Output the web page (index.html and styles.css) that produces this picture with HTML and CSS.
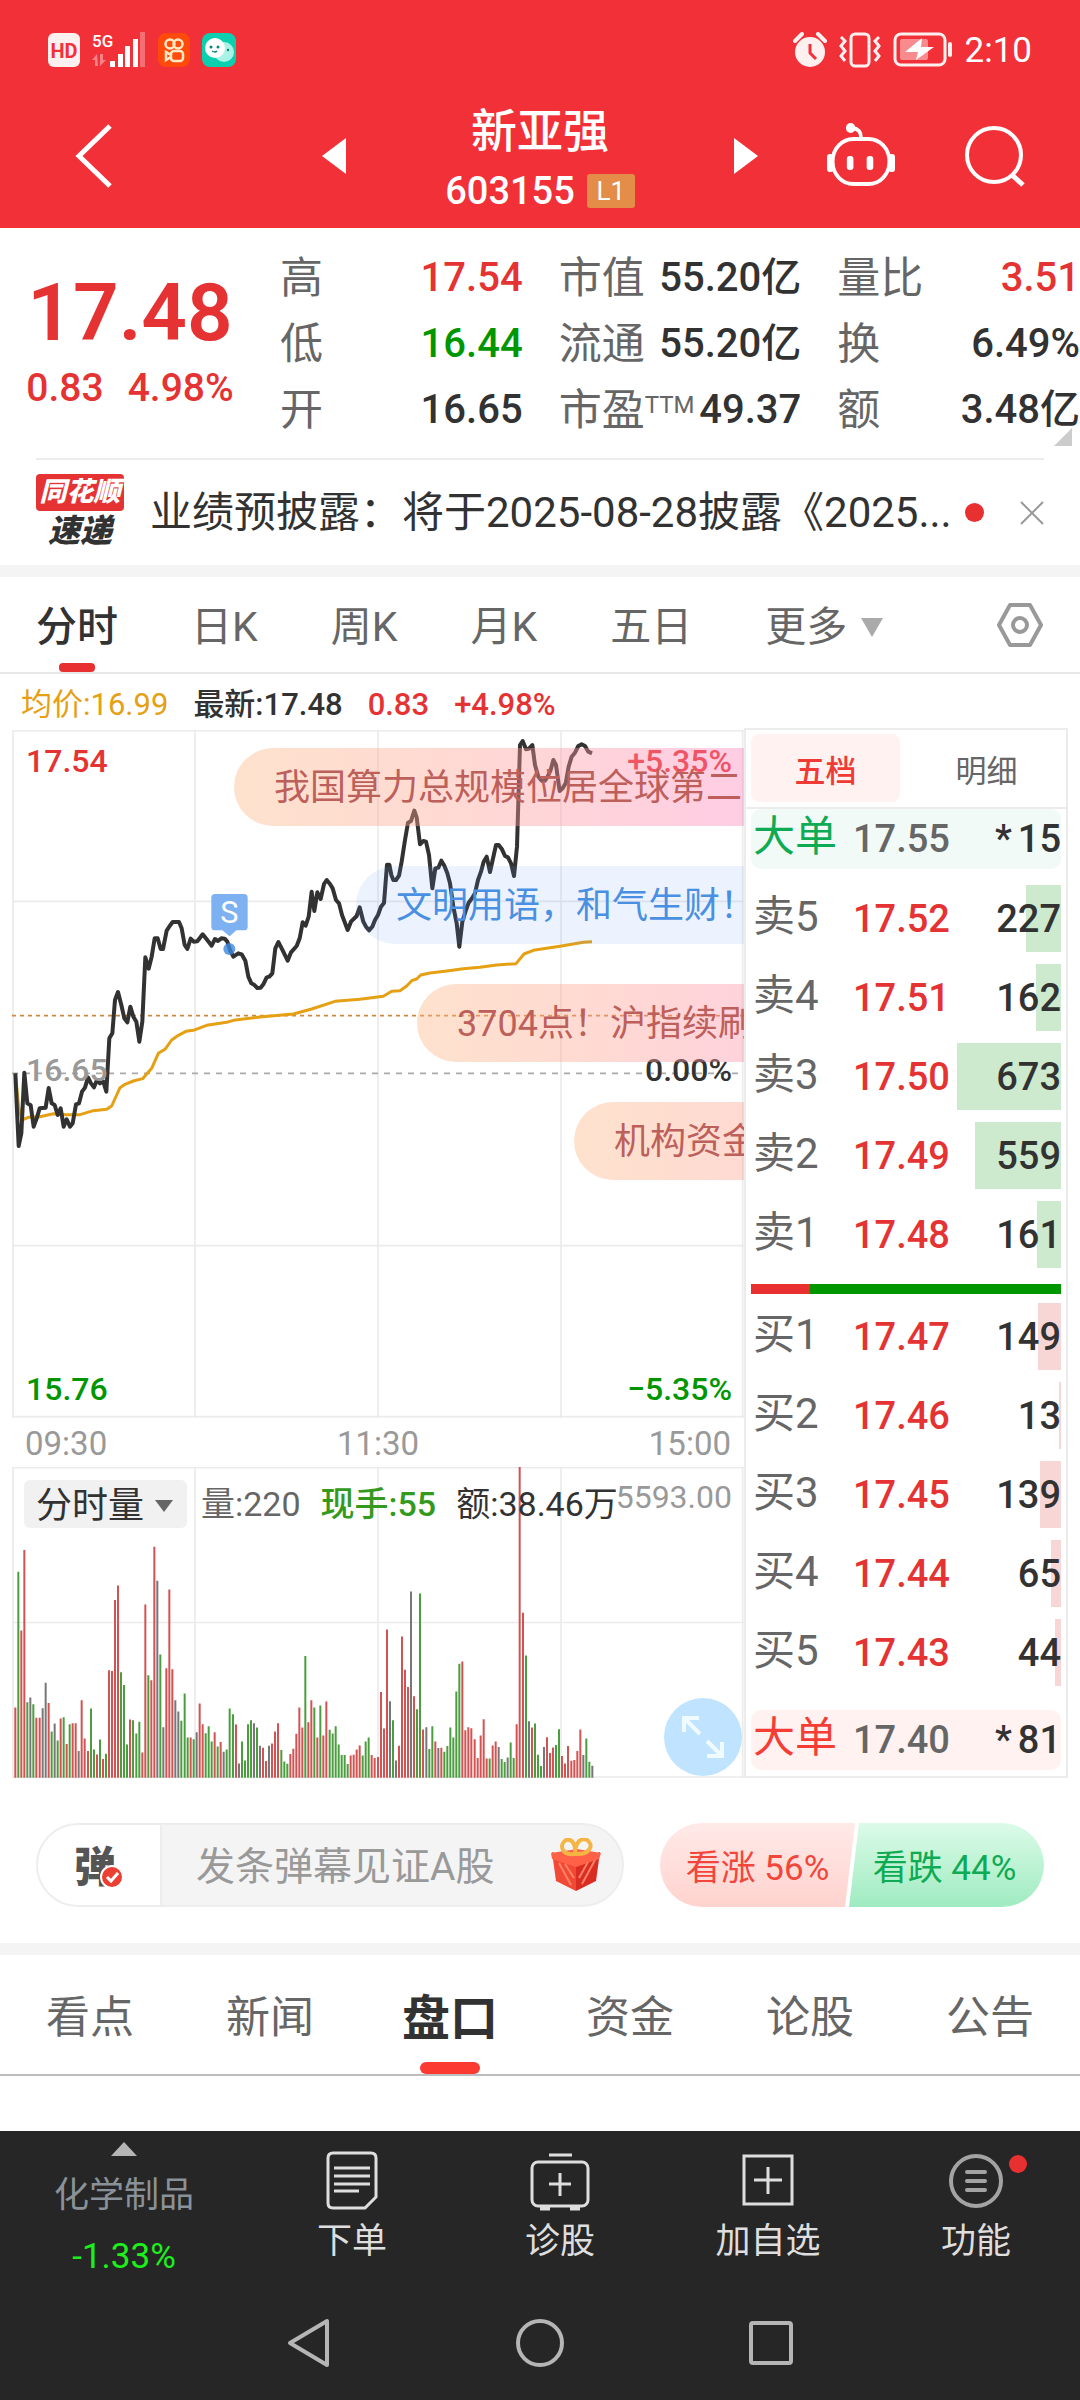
FILE: index.html
```html
<!DOCTYPE html>
<html lang="zh-CN">
<head>
<meta charset="utf-8">
<meta name="viewport" content="width=device-width, initial-scale=1">
<title>新亚强 603155</title>
<link rel="stylesheet" href="styles.css">
</head>
<body>
<header class="top">
  <div class="status">
    <div class="status-side">
      <svg width="32" height="34" viewBox="0 0 32 34"><rect width="32" height="34" rx="6" fill="#fff0f0"/><text x="16" y="25" class="hd">HD</text></svg>
      <svg width="54" height="36" viewBox="0 0 54 36"><text x="0" y="15" class="net">5G</text><g fill="#fff"><path d="M5 22l-5 6h3v6h3zM8 22v12l6-6h-3v-6z" opacity=".4"/><rect x="18" y="29" width="5" height="6"/><rect x="26" y="22" width="5" height="13"/><rect x="33" y="14" width="5" height="21"/><rect x="41" y="7" width="5" height="28"/><rect x="48" y="0" width="5" height="35" opacity=".3"/></g></svg>
      <svg width="32" height="34" viewBox="0 0 32 34"><rect width="32" height="34" rx="8" fill="#ff4a0c"/><g fill="none" stroke="#ffe9c4" stroke-width="2.5"><circle cx="12" cy="11" r="4.500"/><circle cx="20" cy="11" r="4.500"/><rect x="13" y="18" width="12" height="10" rx="3"/><path d="M13 22l-5-3v8l5-3"/></g></svg>
      <svg width="34" height="34" viewBox="0 0 34 34"><rect width="34" height="34" rx="8" fill="#0ccfb0"/><circle cx="22" cy="19" r="10" fill="#a9f2e6"/><circle cx="13" cy="15" r="10" fill="#fff"/><g fill="#087"><circle cx="9" cy="14" r="1.500"/><circle cx="16" cy="14" r="1.500"/><circle cx="26" cy="17" r="1.200"/></g><path d="M10 18q3 2 5 0" stroke="#087" fill="none" stroke-width="1.500"/></svg>
    </div>
    <div class="status-side status-right">
      <svg width="34" height="36" viewBox="0 0 34 36"><circle cx="17" cy="20" r="15" fill="#fff0f0"/><path d="M2 9l7-7M32 9l-7-7" stroke="#fff0f0" stroke-width="4" stroke-linecap="round"/><path d="M17 12v9l6 6" fill="none" stroke="#f13038" stroke-width="3"/></svg>
      <svg width="42" height="36" viewBox="0 0 42 36"><g fill="none" stroke="#fff0f0" stroke-width="3"><rect x="12" y="2" width="18" height="32" rx="4"/><path d="M2 5l4 4-4 5 4 5-4 5 4 5M40 5l-4 4 4 5-4 5 4 5-4 5"/></g></svg>
      <svg width="60" height="36" viewBox="0 0 60 36"><rect x="2" y="2" width="50" height="31" rx="6" fill="none" stroke="#fff0f0" stroke-width="3"/><rect x="7" y="7" width="28" height="21" rx="2" fill="#f98a8e"/><path d="M29 6L12 20h13l-2 8 18-13H28z" fill="#fff"/><rect x="55" y="10" width="4" height="15" rx="2" fill="#fff0f0"/></svg>
      <span class="clock">2:10</span>
    </div>
  </div>
  <div class="titlebar">
    <button class="icon-btn back" aria-label="返回"><svg width="40" height="66" viewBox="0 0 40 66"><path d="M36 3L5 33l31 30" fill="none" stroke="#fff" stroke-width="5"/></svg></button>
    <button class="icon-btn" aria-label="上一只"><svg width="24" height="36" viewBox="0 0 24 36"><path d="M24 0v36L0 18z" fill="#fff"/></svg></button>
    <div class="stock">
      <h1>新亚强</h1>
      <div class="code">603155<span class="level">L1</span></div>
    </div>
    <button class="icon-btn" aria-label="下一只"><svg width="24" height="36" viewBox="0 0 24 36"><path d="M0 0v36l24-18z" fill="#fff"/></svg></button>
    <button class="icon-btn robot" aria-label="智能助手"><svg width="68" height="64" viewBox="0 0 72 64" preserveAspectRatio="none"><g fill="none" stroke="#fff" stroke-width="4"><rect x="6" y="16" width="60" height="45" rx="22"/><path d="M36 15c0-6-2-9-9-10" stroke-width="4"/></g><g fill="#fff"><circle cx="25" cy="5" r="5"/><rect x="21" y="33" width="7" height="14" rx="3"/><rect x="42" y="33" width="7" height="14" rx="3"/><rect x="0" y="31" width="7" height="18" rx="3"/><rect x="65" y="31" width="7" height="18" rx="3"/></g></svg></button>
    <button class="icon-btn" aria-label="搜索"><svg width="62" height="62" viewBox="0 0 62 62"><circle cx="30" cy="30" r="27" fill="none" stroke="#fff" stroke-width="4"/><path d="M48 50l11 10" stroke="#fff" stroke-width="5"/></svg></button>
  </div>
</header>

<section class="quote">
  <div class="price-block">
    <strong class="price">17.48</strong>
    <div class="change"><span>0.83</span><span>4.98%</span></div>
  </div>
  <dl class="stats">
    <div><dt>高</dt><dd class="up">17.54</dd></div>
    <div><dt>低</dt><dd class="down">16.44</dd></div>
    <div><dt>开</dt><dd>16.65</dd></div>
  </dl>
  <dl class="stats">
    <div><dt>市值</dt><dd>55.20亿</dd></div>
    <div><dt>流通</dt><dd>55.20亿</dd></div>
    <div><dt>市盈<sup>TTM</sup></dt><dd>49.37</dd></div>
  </dl>
  <dl class="stats">
    <div><dt>量比</dt><dd class="up">3.51</dd></div>
    <div><dt>换</dt><dd>6.49%</dd></div>
    <div><dt>额</dt><dd>3.48亿</dd></div>
  </dl>
  <span class="corner"></span>
</section>

<section class="notice">
  <div class="brand"><span class="brand-top">同花顺</span><span class="brand-bottom">速递</span></div>
  <a class="notice-text" href="#">业绩预披露：将于2025-08-28披露《2025...</a>
  <span class="dot"></span>
  <button class="icon-btn" aria-label="关闭"><svg width="24" height="24" viewBox="0 0 24 24"><path d="M1 1l22 22M23 1L1 23" stroke="#999" stroke-width="2"/></svg></button>
</section>

<nav class="periods">
  <a class="period active" href="#">分时</a>
  <a class="period" href="#">日K</a>
  <a class="period" href="#">周K</a>
  <a class="period" href="#">月K</a>
  <a class="period" href="#">五日</a>
  <a class="period more" href="#">更多<svg width="22" height="19" viewBox="0 0 22 19"><path d="M0 0h22L11 19z" fill="#aaa"/></svg></a>
  <button class="icon-btn settings" aria-label="设置"><svg width="48" height="46" viewBox="0 0 48 46"><path d="M14 3h20l11 20-11 20H14L3 23z" fill="none" stroke="#999" stroke-width="4" stroke-linejoin="round"/><circle cx="24" cy="23" r="7" fill="none" stroke="#999" stroke-width="4"/></svg></button>
</nav>

<p class="summary"><span class="avg">均价:16.99</span><span>最新:17.48</span><span class="up">0.83</span><span class="up">+4.98%</span></p>

<main class="board">
  <div class="charts">
    <div class="chart">
      <svg class="plot" viewBox="36 30 2196 2064" preserveAspectRatio="none">
        <path class="grid" d="M39 30V2094M585 30V2094M1134 30V2094M1683 30V2094M2228 30V2094M36 32H2232M36 544H2232M36 1577H2232M36 2090H2232"/>
        <path d="M36 887H2232" class="dash-orange"/>
        <path d="M36 1060H2232" class="dash-grey"/>
        <polyline class="line-avg" points="46,1060 56,1160 66,1200 85,1192 120,1190 160,1181 200,1184 240,1184 280,1172 320,1168 335,1158 350,1125 360,1103 375,1093 400,1083 428,1076 440,1062 455,1045 475,1000 495,988 515,960 535,946 558,934 580,931 620,916 680,907 700,901 780,891 880,882 935,867 1005,844 1080,838 1150,829 1175,814 1200,812 1220,798 1235,782 1250,777 1262,765 1290,759 1340,753 1390,746 1440,742 1490,735 1548,731 1572,702 1600,691 1680,679 1750,667 1776,665"/>
        <polyline class="line-price" points="46,1060 50,1150 56,1278 64,1240 73,1058 82,1150 92,1156 101,1220 110,1195 119,1165 137,1163 146,1104 155,1150 164,1155 173,1185 182,1165 191,1220 200,1198 210,1220 218,1210 228,1153 237,1150 246,1115 255,1103 264,1072 273,1090 282,1102 291,1080 300,1090 310,1085 319,1115 328,955 337,940 345,840 354,816 364,855 373,895 382,907 391,860 400,890 409,905 418,965 427,905 436,712 446,746 455,710 464,655 473,655 482,687 489,687 500,632 509,618 518,606 537,606 545,625 554,675 562,687 572,656 581,665 592,664 608,643 620,658 635,677 645,657 654,663 664,655 674,656 682,665 690,690 700,710 715,700 725,703 736,722 745,770 754,790 762,794 772,804 782,803 790,793 800,772 808,770 817,760 826,685 835,666 845,685 863,722 873,697 890,678 899,655 908,607 917,617 926,590 935,515 943,573 952,517 962,537 972,492 980,480 990,492 998,505 1008,540 1017,550 1026,585 1043,630 1053,605 1070,588 1079,562 1090,605 1098,620 1107,631 1117,620 1125,600 1134,585 1143,560 1152,549 1161,434 1168,434 1174,465 1180,480 1188,480 1197,467 1205,425 1215,360 1224,308 1233,303 1243,272 1250,292 1260,373 1270,363 1278,365 1287,405 1297,505 1306,445 1315,443 1324,422 1333,437 1342,460 1350,490 1360,560 1370,610 1378,680 1387,605 1398,570 1406,548 1416,535 1425,520 1434,480 1443,455 1451,425 1460,410 1470,456 1478,420 1488,375 1496,375 1506,388 1515,408 1524,412 1533,430 1542,468 1551,380 1560,75 1568,63 1578,88 1587,86 1597,75 1605,135 1615,170 1625,182 1635,182 1643,170 1652,150 1660,120 1668,135 1679,213 1688,205 1697,190 1706,140 1715,110 1725,98 1735,78 1745,73 1755,78 1765,95 1776,100"/>
        <path class="flag" d="M645 522h87q11 0 11 11v87q0 11-11 11h-23l-20 18-22-18h-22q-11 0-11-11v-87q0-11 11-11z"/>
        <text class="flag-text" x="688" y="608">S</text>
        <circle class="flag-dot" cx="688" cy="687" r="18"/>
      </svg>
      <span class="axis top-left up">17.54</span>
      <span class="axis top-right up">+5.35%</span>
      <span class="axis mid-left">16.65</span>
      <span class="axis mid-right">0.00%</span>
      <span class="axis bottom-left down">15.76</span>
      <span class="axis bottom-right down">−5.35%</span>
      <div class="danmaku">
        <span class="bullet warm b1">我国算力总规模位居全球第二</span>
        <span class="bullet cool b2">文明用语，和气生财！</span>
        <span class="bullet warm b3">3704点！沪指续刷</span>
        <span class="bullet warm b4">机构资金</span>
      </div>
    </div>
    <div class="times"><span>09:30</span><span>11:30</span><span>15:00</span></div>
    <div class="volume">
      <svg class="plot" viewBox="36 378 2196 936" preserveAspectRatio="none">
        <path class="grid" d="M39 378V1314M585 378V1314M1134 378V1314M1683 378V1314M2228 378V1314M36 380H2232M36 846H2232M36 1311H2232"/>
        <path class="vol vol-up" id="vol-r"/>
        <path class="vol vol-down" id="vol-g"/>
        <path class="vol vol-flat" id="vol-k"/>
      </svg>
      <div class="vol-head">
        <button class="vol-pick">分时量<svg width="18" height="12" viewBox="0 0 18 12"><path d="M0 0h18L9 12z" fill="#666"/></svg></button>
        <span class="muted">量:220</span><span class="vol-now">现手:55</span><span>额:38.46万</span>
      </div>
      <span class="vol-max">5593.00</span>
      <button class="expand" aria-label="全屏"><svg width="44" height="44" viewBox="0 0 44 44"><path d="M19 19L4 4M3 17V3h15M26 26l14 14M41 27v14H26" fill="none" stroke="#f0fbff" stroke-width="4"/></svg></button>
    </div>
  </div>

  <aside class="book">
    <div class="book-tabs"><button class="book-tab active">五档</button><button class="book-tab">明细</button></div>
    <table class="levels">
      <tr class="big sell"><th>大单</th><td>17.55</td><td><i>*</i>15</td></tr>
    </table>
    <table class="levels asks">
      <tr><th>卖5</th><td class="up">17.52</td><td><b class="depth" style="width:35px"></b><span>227</span></td></tr>
      <tr><th>卖4</th><td class="up">17.51</td><td><b class="depth" style="width:25px"></b><span>162</span></td></tr>
      <tr><th>卖3</th><td class="up">17.50</td><td><b class="depth" style="width:104px"></b><span>673</span></td></tr>
      <tr><th>卖2</th><td class="up">17.49</td><td><b class="depth" style="width:86px"></b><span>559</span></td></tr>
      <tr><th>卖1</th><td class="up">17.48</td><td><b class="depth" style="width:24px"></b><span>161</span></td></tr>
    </table>
    <div class="ratio"><span style="width:19%"></span></div>
    <table class="levels bids">
      <tr><th>买1</th><td class="up">17.47</td><td><b class="depth" style="width:23px"></b><span>149</span></td></tr>
      <tr><th>买2</th><td class="up">17.46</td><td><b class="depth" style="width:2px"></b><span>13</span></td></tr>
      <tr><th>买3</th><td class="up">17.45</td><td><b class="depth" style="width:21px"></b><span>139</span></td></tr>
      <tr><th>买4</th><td class="up">17.44</td><td><b class="depth" style="width:10px"></b><span>65</span></td></tr>
      <tr><th>买5</th><td class="up">17.43</td><td><b class="depth" style="width:6px"></b><span>44</span></td></tr>
    </table>
    <table class="levels">
      <tr class="big buy"><th>大单</th><td>17.40</td><td><i>*</i>81</td></tr>
    </table>
  </aside>
</main>

<section class="social">
  <div class="composer">
    <button class="toggle" aria-label="弹幕开关"><span>弹</span><svg width="24" height="24" viewBox="0 0 24 24"><circle cx="12" cy="12" r="11" fill="#ea3f33" stroke="#fff" stroke-width="2"/><path d="M7 12l4 4 7-8" fill="none" stroke="#fff" stroke-width="3"/></svg></button>
    <input class="message" type="text" placeholder="发条弹幕见证A股" aria-label="发条弹幕见证A股">
    <button class="icon-btn gift" aria-label="礼物"><svg width="50" height="54" viewBox="0 0 50 54"><path d="M1 14l24 9v30L5 43z" fill="#f04a36"/><path d="M49 14l-24 9v30l20-10z" fill="#d92c22"/><path d="M0 15l26-4 24 4-2 6-23 8-24-8z" fill="#ff6048"/><path d="M8 25l12 22M14 26l9 14M44 22L31 46M37 24l-9 16" stroke="#ff8064" stroke-width="2"/><path d="M24 16C10 18 8 6 15 2c7-2 10 6 9 14 0-9 4-17 12-14 7 4 4 15-12 14z" fill="none" stroke="#f4b545" stroke-width="4"/></svg></button>
  </div>
  <div class="vote">
    <button class="vote-up">看涨 56%</button>
    <button class="vote-down">看跌 44%</button>
  </div>
</section>

<nav class="sections">
  <a href="#">看点</a><a href="#">新闻</a><a class="active" href="#">盘口</a><a href="#">资金</a><a href="#">论股</a><a href="#">公告</a>
</nav>
<div class="content"></div>

<footer class="bottom">
  <div class="actions">
    <a class="sector" href="#"><svg width="26" height="14" viewBox="0 0 26 14"><path d="M13 0l13 14H0z" fill="#b5b5b5"/></svg><span>化学制品</span><span class="sector-change">-1.33%</span></a>
    <button class="action"><svg width="54" height="60" viewBox="0 0 54 60"><g fill="none" stroke="#dedede" stroke-width="3"><path d="M8 2h38q5 0 5 5v39L40 57H8q-5 0-5-5V7q0-5 5-5z"/><path d="M9 17h36M9 25h36M9 33h36M9 40h25"/></g></svg><span>下单</span></button>
    <button class="action"><svg width="62" height="60" viewBox="0 0 62 60"><g fill="none" stroke="#dedede" stroke-width="3"><rect x="3" y="11" width="56" height="44" rx="6"/><path d="M20 4h23M31 22v23M20 33h22"/><path d="M11 57h10M41 57h10" stroke-width="5"/></g></svg><span>诊股</span></button>
    <button class="action"><svg width="54" height="60" viewBox="0 0 54 60"><g fill="none" stroke="#dedede" stroke-width="3"><rect x="3" y="5" width="48" height="48"/><path d="M27 16v27M13 29h28"/></g></svg><span>加自选</span></button>
    <button class="action"><svg width="54" height="60" viewBox="0 0 54 60"><circle cx="27" cy="30" r="25" fill="none" stroke="#a3a3a3" stroke-width="4"/><path d="M18 21h18M18 30h18M18 39h18" stroke="#a3a3a3" stroke-width="4" stroke-linecap="round"/></svg><span>功能</span><i class="badge"></i></button>
  </div>
  <div class="system">
    <button class="icon-btn" aria-label="后退"><svg width="44" height="50" viewBox="0 0 44 50"><path d="M40 3v44L3 25z" fill="none" stroke="#b5b5b5" stroke-width="4" stroke-linejoin="round"/></svg></button>
    <button class="icon-btn" aria-label="主页"><svg width="50" height="50" viewBox="0 0 50 50"><circle cx="25" cy="25" r="22" fill="none" stroke="#b5b5b5" stroke-width="4"/></svg></button>
    <button class="icon-btn" aria-label="最近任务"><svg width="44" height="44" viewBox="0 0 44 44"><rect x="2" y="2" width="40" height="40" rx="2" fill="none" stroke="#b5b5b5" stroke-width="4"/></svg></button>
  </div>
</footer>
<script src="chart.js"></script>
</body>
</html>
```

FILE: styles.css
```css
:root {
  --red: #e53232;
  --green: #009600;
  --ink: #323232;
  --grey: #666;
  --line: #ececec;
}
* { box-sizing: border-box; }
body {
  margin: 0;
  min-height: 100vh;
  display: flex;
  flex-direction: column;
  background: #fff;
  color: var(--ink);
  font-family: Roboto, "Noto Sans CJK SC", sans-serif;
}
button { border: 0; padding: 0; background: none; font: inherit; color: inherit; }
a { color: inherit; text-decoration: none; }
svg { display: block; flex: none; }
dl, dd, dt, p, h1 { margin: 0; font-weight: 400; }
.up { color: var(--red); }
.down { color: var(--green); }
.icon-btn { display: flex; align-items: center; justify-content: center; }

/* header */
.top { background: #f13038; color: #fff; }
.status { display: flex; justify-content: space-between; align-items: center; height: 100px; padding: 0 48px; }
.status-side { display: flex; align-items: center; gap: 12px; }
.hd { font: 700 20px Roboto, sans-serif; fill: #f13038; text-anchor: middle; }
.net { font: 500 17px Roboto, sans-serif; fill: #fff; }
.clock { font-size: 35px; line-height: 40px; padding-top: 2px; }
.titlebar {
  display: grid;
  grid-template-columns: 300px 68px 1fr 68px 162px 106px;
  align-items: center;
  height: 128px;
  padding: 0 32px 16px 0;
}
.back { justify-self: start; padding-left: 74px; }
.robot svg { margin-top: -2px; }
.stock { text-align: center; padding-top: 6px; margin: -8px 0; }
.stock h1 { font-size: 46px; line-height: 64px; font-weight: 500; }
.code { display: flex; justify-content: center; align-items: center; gap: 12px; font-size: 38px; line-height: 56px; font-weight: 500; }
.level { width: 48px; background: #e38d49; font-size: 26px; line-height: 34px; border-radius: 3px; font-weight: 400; }

/* quote */
.quote {
  position: relative;
  display: grid;
  grid-template-columns: 244px repeat(3, 1fr);
  column-gap: 36px;
  height: 230px;
  padding-top: 17px;
}
.price-block { color: var(--red); text-align: center; padding-left: 16px; }
.price { display: block; font-size: 80px; line-height: 100px; padding-top: 18px; font-weight: 600; }
.change { display: flex; justify-content: center; gap: 24px; font-size: 39px; line-height: 50px; font-weight: 500; }
.stats { display: flex; flex-direction: column; }
.stats > div { display: flex; justify-content: space-between; height: 66px; align-items: center; font-size: 43px; line-height: 66px; white-space: nowrap; }
.stats dt { color: var(--grey); }
.stats dd { font-size: 40px; font-weight: 500; }
.stats sup { font-size: 24px; line-height: 24px; vertical-align: 12px; }
.corner { position: absolute; right: 8px; bottom: 12px; border: 9px solid #ccc; border-top-color: transparent; border-left-color: transparent; }

/* notice */
.notice { display: flex; align-items: center; height: 107px; margin: 0 36px; border-top: 2px solid var(--line); }
.brand { width: 88px; text-align: center; font-style: italic; font-weight: 900; }
.brand-top { display: block; background: #e53232; color: #fff; font-size: 27px; line-height: 37px; border-radius: 4px; }
.brand-bottom { display: block; font-size: 32px; line-height: 40px; }
.notice-text { flex: 1; margin: 0 0 0 26px; font-size: 42px; line-height: 60px; overflow: hidden; white-space: nowrap; text-overflow: ellipsis; }
.dot { width: 19px; height: 19px; margin-right: 36px; border-radius: 50%; background: #e93030; }

/* period tabs */
.periods { display: flex; align-items: center; height: 109px; padding: 0 36px; border-top: 12px solid #f4f4f4; border-bottom: 2px solid #e8e8e8; font-size: 41px; color: var(--grey); }
.period { position: relative; padding-top: 6px; line-height: 89px; margin-right: 73px; }
.period.active { color: var(--ink); font-weight: 500; }
.period.active::after { content: ""; position: absolute; left: 50%; bottom: 0; width: 36px; height: 9px; margin-left: -18px; border-radius: 4px; background: #e93030; }
.more { display: flex; align-items: center; gap: 14px; }
.settings { margin-left: auto; }

.summary { display: flex; gap: 25px; height: 54px; padding: 0 21px; line-height: 62px; font-size: 31px; }
.summary .up, .summary .avg + span { font-weight: 500; }
.avg { color: #e5a014; }

/* board */
.board { display: grid; grid-template-columns: minmax(0, 1fr) 324px; padding: 0 12px; }
.charts { min-width: 0; padding-top: 2px; }
.chart { position: relative; height: 688px; }
.plot { display: block; width: 100%; height: 100%; }
.grid { fill: none; stroke: #ebebeb; stroke-width: 5; }
.dash-orange { stroke: #d08a40; stroke-width: 5; stroke-dasharray: 12 12; }
.dash-grey { stroke: #aaa; stroke-width: 5; stroke-dasharray: 18 18; }
.line-avg { fill: none; stroke: #e5a014; stroke-width: 9; stroke-linejoin: round; }
.line-price { fill: none; stroke: #323232; stroke-width: 12; stroke-linejoin: round; }
.flag { fill: #7eb1f2; }
.flag-text { fill: #fff; font-size: 92px; text-anchor: middle; }
.flag-dot { fill: #3d86df; opacity: .8; }
.axis { position: absolute; font-size: 32px; line-height: 40px; font-weight: 500; }
.top-left, .mid-left, .bottom-left { left: 14px; }
.top-right, .mid-right, .bottom-right { right: 12px; }
.top-left, .top-right { top: 11px; }
.mid-left, .mid-right { top: 320px; }
.mid-left { color: #999; }
.bottom-left, .bottom-right { bottom: 9px; }
.danmaku { position: absolute; inset: 0; overflow: hidden; }
.bullet { position: absolute; height: 78px; padding: 0 40px; border-radius: 39px; font-size: 36px; line-height: 80px; white-space: nowrap; }
.warm { background: linear-gradient(90deg, rgba(252, 182, 130, .4), rgba(255, 160, 145, .4) 40%, rgba(255, 125, 193, .4)); color: #bd5f5b; }
.cool { background: rgba(97, 155, 247, .12); color: #4a90e2; }
.b1 { left: 222px; top: 18px; width: 560px; }
.b2 { left: 344px; top: 136px; width: 440px; }
.b3 { left: 405px; top: 254px; width: 480px; }
.b4 { left: 562px; top: 372px; width: 480px; }
.times { display: flex; justify-content: space-between; height: 49px; padding: 0 13px; line-height: 51px; font-size: 33px; color: #999; }
.volume { position: relative; height: 311px; }
.vol { fill: none; stroke-width: 6; }
.vol-up { stroke: #d45252; }
.vol-down { stroke: #4a9e3e; }
.vol-flat { stroke: #777; }
.vol-head { position: absolute; left: 12px; top: 11px; display: flex; align-items: center; gap: 20px; font-size: 34px; line-height: 52px; white-space: nowrap; }
.vol-pick { display: flex; align-items: center; gap: 11px; height: 48px; padding: 3px 14px 0 12px; margin-right: -6px; border-radius: 6px; background: #f1f1f1; font-size: 36px; line-height: 44px; }
.muted { color: var(--grey); }
.vol-now { color: #339a1e; font-weight: 500; }
.vol-max { position: absolute; right: 12px; top: 9px; color: #999; font-size: 32px; line-height: 42px; }
.expand { position: absolute; right: 2px; bottom: 2px; width: 78px; height: 78px; display: flex; align-items: center; justify-content: center; border-radius: 50%; background: #c0e4ff; }

/* order book */
.book { border: 2px solid var(--line); padding: 0 5px; display: flex; flex-direction: column; }
.book-tabs { display: grid; grid-template-columns: 1fr 1fr; gap: 12px; height: 79px; padding: 4px 5px 5px; margin: 0 -5px; border-bottom: 2px solid var(--line); color: var(--grey); font-size: 31px; }
.book-tab { border-radius: 8px; }
.book-tab.active { background: #fff2f1; color: #f03a35; font-weight: 500; }
.levels { width: 100%; border-spacing: 0; table-layout: fixed; }
.levels th { width: 102px; padding: 0 0 4px 2px; text-align: left; font-size: 42px; font-weight: 400; color: var(--grey); white-space: nowrap; line-height: 56px; }
.levels td { position: relative; width: 98px; padding: 0; font-size: 38px; font-weight: 500; }
.levels td:last-child { width: auto; text-align: right; }
.levels td span { position: relative; }
.levels i { font-style: normal; margin-right: 6px; }
.levels tr { height: 79px; }
.levels .big { height: 60px; }
.big td:nth-child(2) { color: var(--grey); }
.big > * { background: #f1faf6; }
.big.buy > * { background: #fff2f1; }
.big th { border-radius: 10px 0 0 10px; }
.big td:last-child { border-radius: 0 10px 10px 0; }
.big.sell th { color: #0eab54; }
.big.buy th { color: #f53d36; }
.depth { position: absolute; right: 0; top: 6px; height: 67px; background: #cdeace; }
.bids .depth { background: #f9d6d6; }
.asks { margin-top: 10px; }
.ratio { height: 10px; margin: 10px 0 3px; background: var(--green); }
.ratio span { display: block; height: 10px; background: #e93030; }
.bids { margin-bottom: 18px; }

/* danmaku input and vote */
.social { display: grid; grid-template-columns: 588fr 384fr; gap: 36px; padding: 45px 36px 36px; }
.composer { display: flex; height: 84px; border: 2px solid #ededed; border-radius: 42px; overflow: hidden; background: #f4f4f4; }
.toggle { position: relative; width: 124px; padding: 0 8px 4px 0; background: #fff; border-right: 2px solid #ededed; font-size: 42px; font-weight: 900; color: #555; }
.toggle svg { position: absolute; left: 62px; top: 40px; }
.message { flex: 1; min-width: 0; border: 0; padding: 4px 0 0 34px; background: none; font: inherit; font-size: 39px; }
.message::placeholder { color: #999; }
.gift { width: 92px; }
.vote { display: grid; grid-template-columns: 1fr 1fr; height: 84px; border-radius: 42px; overflow: hidden; font-size: 35px; }
.vote button { padding-bottom: 2px; }
.vote-up { margin-right: -3px; background: linear-gradient(#ffeae8, #ffd3ce); color: #f0463c; clip-path: polygon(0 0, 100% 0, calc(100% - 10px) 100%, 0 100%); }
.vote-down { margin-left: -7px; background: linear-gradient(#dcfbe9, #9febc0); color: #0eab54; clip-path: polygon(14px 0, 100% 0, 100% 100%, 4px 100%); }

/* section tabs */
.sections { display: grid; grid-template-columns: repeat(6, 1fr); height: 133px; border-top: 12px solid #f4f4f4; border-bottom: 2px solid #bdbdbd; text-align: center; font-size: 44px; line-height: 111px; color: var(--grey); }
.sections a { padding-top: 8px; }
.sections .active { position: relative; font-size: 48px; font-weight: 700; color: var(--ink); }
.sections .active::after { content: ""; position: absolute; left: 50%; bottom: 0; width: 60px; height: 12px; margin-left: -30px; border-radius: 6px; background: #fb3a32; }
.content { flex: 1; }

/* bottom bar */
.bottom { background: #262626; color: #dedede; }
.actions { display: grid; grid-template-columns: 248px repeat(4, 1fr); height: 154px; font-size: 35px; }
.sector { display: flex; flex-direction: column; align-items: center; padding-top: 11px; color: #8a9299; line-height: 61px; }
.sector span:first-of-type { margin-top: 9px; }
.sector-change { color: #1cf01c; }
.action { position: relative; display: flex; flex-direction: column; align-items: center; padding-top: 20px; line-height: 62px; }
.badge { position: absolute; left: 50%; top: 24px; margin-left: 33px; width: 18px; height: 18px; border-radius: 50%; background: #e93030; }
.system { display: grid; grid-template-columns: 1fr 1fr 1fr; height: 115px; padding: 0 194px; }
```

FILE: chart.js
```js
// One entry per minute: colour key (r up, g down, k flat) and the y of the bar's top.
const bars = `r1102 g693 r870 r628 g1086 k1072 g1092 r1133 r1133 k1104 k1027 r1088 g1174 k1150 g1201 r1135 g1131 r1212 g1152 r1149
r1149 k1233 r1080 r1195 r1233 g1105 g1228 r1243 g1198 r1257 g1241 r990 r992 r778 r735 g996 g1034 g1213 r1138 g1140
g1180 g1145 r1237 r792 g1005 r1020 r618 k720 g942 k1161 r984 r747 r987 k1080 k1114 g1142 g1060 g1192 r1192 g1197
k1176 r1090 r1152 g1179 g1158 g1204 r1176 g1219 r1206 k1235 g1228 g1105 g1122 r1153 k1270 g1204 g1261 g1152 g1140 k1149
g1162 k1217 r1223 r1263 k1217 r1210 r1174 r1149 g1230 g1264 g1271 r1242 r1226 r1181 r1102 r1162 g947 r1146 r1080 g1102
r1192 g1096 r1186 r1084 g1169 g1180 g1158 g1213 g1245 g1245 g1272 r1246 r1244 r1228 r1216 g1246 g1204 g1192 r1245 r1254
r1251 r1055 r1165 r867 k1083 g1140 k1261 r1217 r888 r988 r1040 k753 r1068 g1107 g759 r1168 k1161 g1227 g1158 r1204
k1224 r1223 g1235 g1218 g1162 g1192 g1054 g970 r963 r1170 r1161 r1164 r1197 r1254 r1186 r1137 r1255 g1255 r1216 r1204
k1221 g1257 g1266 k1252 g1207 g1254 r1152 r378 r817 g945 k1143 r1162 g1150 g1244 g1278 k1221 r1191 r1239 r1222 g1215
g1167 r1248 r1270 r1218 r1262 r1260 r1233 r1168 k1245 g1195 g1265 k1277`.split(/\s+/);

const first = 46, last = 1777, base = 1313;
const step = (last - first) / (bars.length - 1);
const paths = { r: "", g: "", k: "" };
bars.forEach((bar, i) => {
  const x = Math.round(first + i * step);
  paths[bar[0]] += `M${x} ${base}V${bar.slice(1)}`;
});
for (const key in paths) {
  document.getElementById("vol-" + key).setAttribute("d", paths[key]);
}
```
